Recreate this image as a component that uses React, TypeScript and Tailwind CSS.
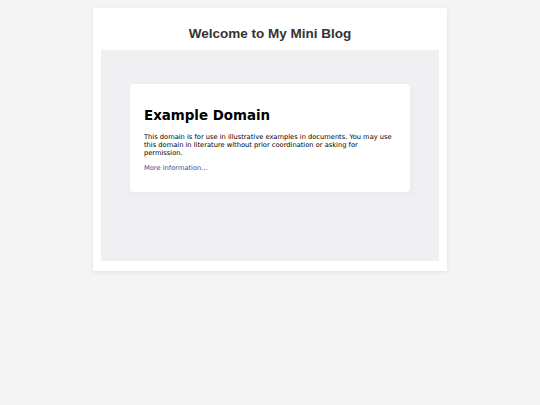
export default function App() {
  return (
    <div className="min-h-screen bg-[#f4f4f4] pt-2" style={{ fontFamily: '"Liberation Sans", Arial, sans-serif' }}>
      <div className="mx-auto w-[354px] bg-white px-2 pt-[15px] pb-[10px] shadow-[0_1px_4px_rgba(0,0,0,0.08)]">
        <h1 className="mb-[6px] text-center text-[13.5px] font-bold leading-[21px] text-[#333]">
          Welcome to My Mini Blog
        </h1>
        <div className="h-[211px] bg-[#f0f0f2] pt-[34px]" style={{ fontFamily: '"DejaVu Sans", sans-serif' }}>
          <div className="mx-auto w-[280px] rounded-[4px] bg-white p-[14px] shadow-[2px_3px_7px_2px_rgba(0,0,0,0.02)]">
            <h2 className="mt-[10px] mb-[9px] text-[13.4px] font-bold leading-[16px] text-black">Example Domain</h2>
            <p className="text-[6.7px] leading-[8px] text-black">
              This domain is for use in illustrative examples in documents. You may use this domain in literature
              without prior coordination or asking for permission.
            </p>
            <p className="mt-[7px] mb-[6px] text-[6.7px] leading-[8px]">
              <a href="#" className="text-[#38488f]">More information...</a>
            </p>
          </div>
        </div>
      </div>
    </div>
  )
}
